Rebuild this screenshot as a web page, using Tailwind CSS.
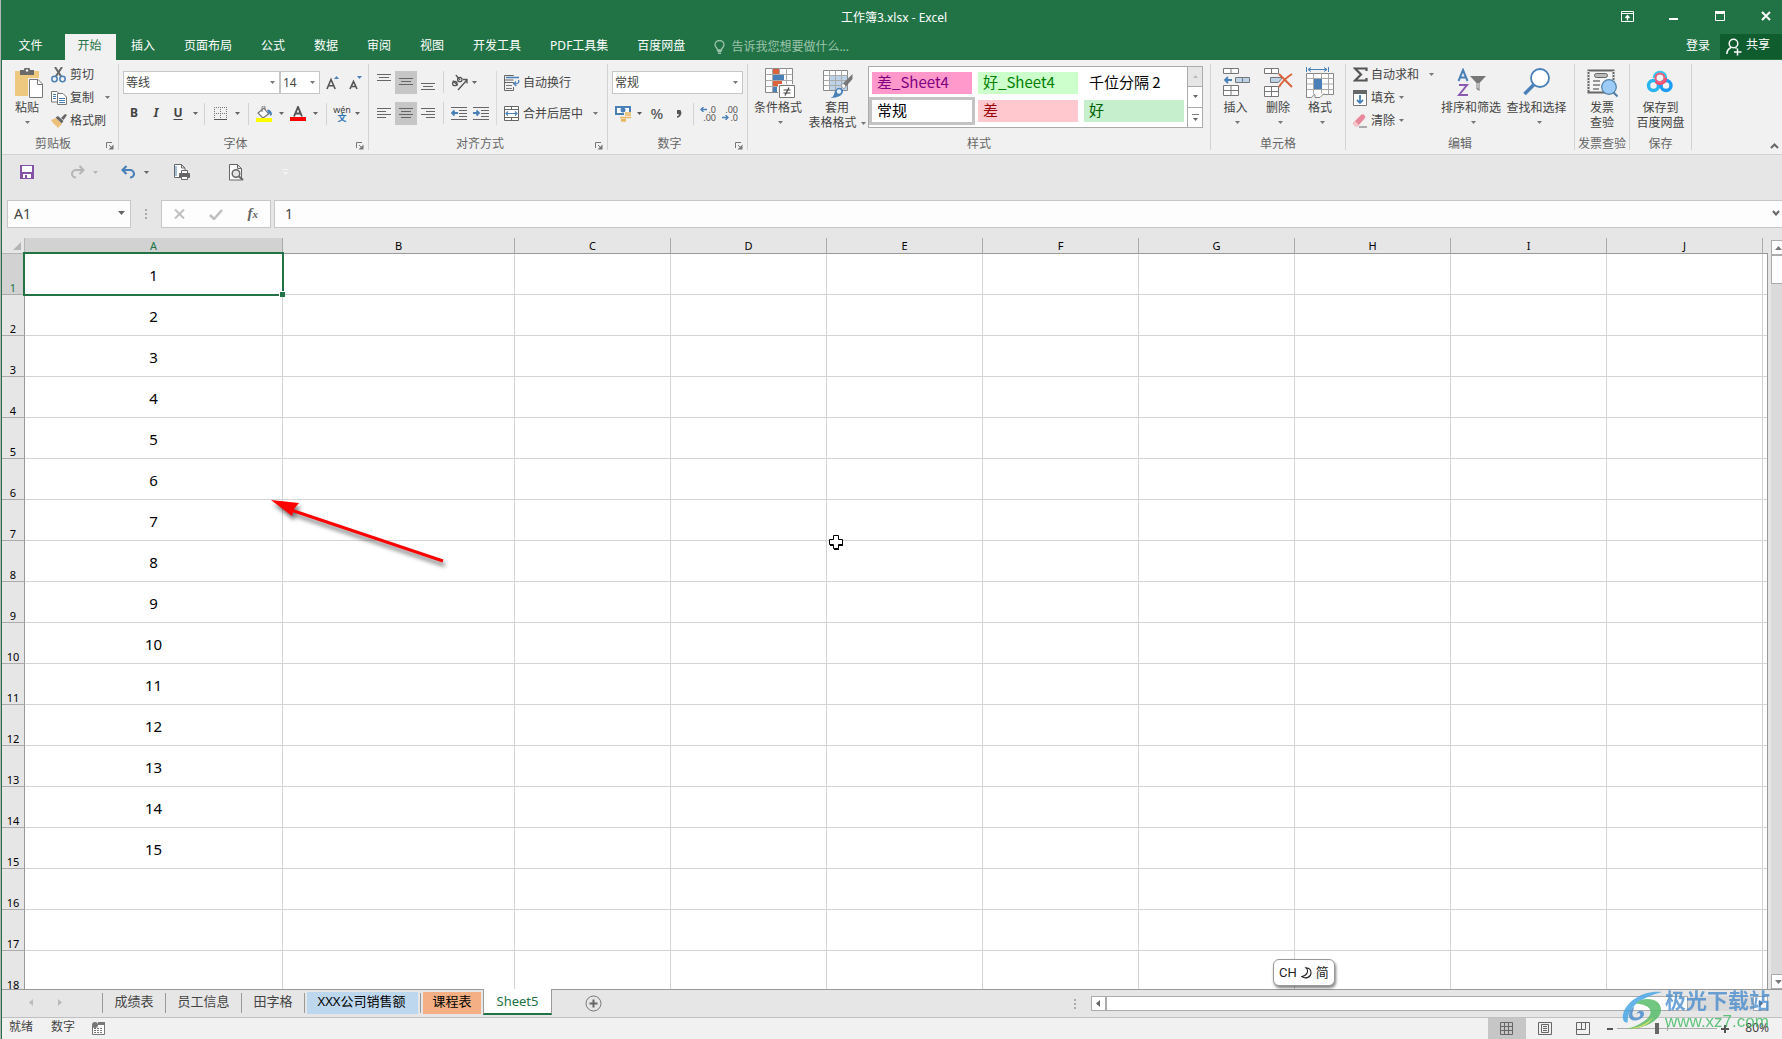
<!DOCTYPE html>
<html lang="zh-CN">
<head>
<meta charset="utf-8">
<title>工作簿3.xlsx - Excel</title>
<script src="https://cdn.jsdelivr.net/npm/@tailwindcss/browser@4"></script>
</head>
<body class="bg-[#b5b5b5] pl-px">
<!-- shared symbols -->
<svg class="hidden">
  <symbol id="dn" viewBox="0 0 7 4"><path d="M0 0h7L3.5 4z" fill="currentColor"/></symbol>
  <symbol id="up" viewBox="0 0 7 4"><path d="M0 4h7L3.5 0z" fill="currentColor"/></symbol>
  <symbol id="launch" viewBox="0 0 8 8"><path d="M.5 6V.5H6M3 3l3 3" fill="none" stroke="#777"/><path d="M7.500 2.500v5h-5z" fill="#777"/></symbol>
</svg>

<div class="flex h-screen flex-col overflow-hidden border-l border-[#217346] bg-[#e6e6e6] font-['Noto_Sans','Noto_Sans_CJK_SC',sans-serif] text-[12px] leading-[14px] text-[#444]">

  <!-- title bar -->
  <header class="relative flex h-[34px] shrink-0 items-center justify-center bg-[#217346] text-white">
    <h1 class="pt-px pl-[4px]">工作簿3.xlsx - Excel</h1>
    <div class="absolute top-0 right-0 flex h-[32px] items-center">
      <button aria-label="功能区显示选项" class="flex w-[46px] justify-center"><svg width="13" height="11" viewBox="0 0 13 11"><path d="M.5.5h12v10H.5zM.5 2.500h12" fill="none" stroke="#fff"/><path d="M6.500 9.500V5M4.500 7l2-2.500 2 2.500" fill="none" stroke="#fff" stroke-width="1.400"/></svg></button>
      <button aria-label="最小化" class="flex w-[47px] justify-center"><svg width="10" height="10"><path d="M0 7h9v2H0z" fill="#fff"/></svg></button>
      <button aria-label="最大化" class="flex w-[46px] justify-center"><svg width="10" height="10"><path d="M.5.5h9v9h-9z" fill="none" stroke="#fff"/><path d="M0 0h10v3H0z" fill="#fff"/></svg></button>
      <button aria-label="关闭" class="flex w-[39px] pl-[18px]"><svg width="10" height="10"><path d="M1 1l8 8M9 1L1 9" stroke="#fff" stroke-width="2"/></svg></button>
    </div>
  </header>

  <!-- ribbon tabs -->
  <nav class="flex h-[26px] shrink-0 items-stretch bg-[#217346] text-white">
    <button class="w-[63px] pr-[6px] pb-[2px]">文件</button>
    <button class="w-[51px] bg-[#f1f1f1] pr-[2px] pb-[2px] text-[#217346]">开始</button>
    <div class="ml-[15px] flex gap-[29px] pb-[2px]">
      <button>插入</button><button>页面布局</button><button>公式</button><button>数据</button><button>审阅</button><button>视图</button><button>开发工具</button><button>PDF工具集</button><button>百度网盘</button>
      <button class="flex items-center gap-[6px] pt-[2px] text-[#9cc3ab]"><svg width="11" height="14" viewBox="0 0 11 14" fill="none" stroke="#9cc3ab" stroke-width="1.300"><path d="M3.500 10C3.500 8 1 7 1 4.800a4.500 4.300 0 0 1 9 0C10 7 7.500 8 7.500 10zM3.500 11.500h4M4 13.300h3"/></svg>告诉我您想要做什么...</button>
    </div>
    <div class="ml-auto flex">
      <button class="pr-[10px] pb-[2px]">登录</button>
      <button class="mb-px flex w-[62px] items-center gap-1 bg-[#0f5c2f] pl-[6px]"><svg width="16" height="18" viewBox="0 0 16 18" fill="none" stroke="#fff" stroke-width="1.500"><circle cx="7.500" cy="5.500" r="4.300"/><path d="M5 9.500C2 11 1 13 .8 16M9.500 9.500l1 1M11.500 10.500v7M8 14h7.500"/></svg><span class="pb-[3px]">共享</span></button>
    </div>
  </nav>

  <!-- ribbon -->
  <section class="flex h-[95px] shrink-0 border-b border-[#d2d2d2] bg-[#f1f1f1]">
    <!-- clipboard -->
    <div class="relative flex w-[116px] flex-col">
      <div class="flex h-[76px]">
        <button class="flex w-[49px] flex-col items-center pt-[8px] pl-px">
          <svg class="ml-[4px]" width="28" height="30" viewBox="0 0 28 30"><path d="M0 3h24v25H0z" fill="#edc87e"/><path d="M5 7V2h4a3 3 0 0 1 6 0h4v5z" fill="#6a6a6a"/><circle cx="12" cy="2.500" r="1.200" fill="#f1f1f1"/><path d="M13 10h15v20H13z" fill="#f1f1f1"/><path d="M14.500 11.500H23l4.500 4.500v13.500h-13z" fill="#fff" stroke="#777"/><path d="M22.500 11.500v5h5" fill="none" stroke="#777"/></svg>
          <span class="mt-[3px]">粘贴</span><svg class="mt-[6px] text-[#777]" width="5" height="3"><use href="#dn"/></svg>
        </button>
        <div class="flex flex-col pt-[3px]">
          <button class="flex h-[23px] items-center gap-[3px]"><svg width="16" height="16" viewBox="0 0 16 16" fill="none"><path d="M4 0l6.500 10M11 0L4.500 10" stroke="#666" stroke-width="2"/><circle cx="3.500" cy="12" r="2.700" stroke="#4a80b8" stroke-width="1.500"/><circle cx="11.500" cy="12" r="2.700" stroke="#4a80b8" stroke-width="1.500"/></svg>剪切</button>
          <button class="flex h-[23px] items-center gap-[3px]"><svg width="16" height="14" viewBox="0 0 16 14"><g fill="#fff" stroke="#777"><path d="M.5.5H6L8.500 3v8h-8z"/><path d="M6.500 2.500H12L15.500 6v7.500h-9z"/></g><path d="M2 3.500h3M2 5.500h3M2 7.500h3M8 7.500h6M8 9.500h6M8 11.500h6" stroke="#4a80b8"/></svg>复制<svg class="ml-[8px] text-[#777]" width="5" height="3"><use href="#dn"/></svg></button>
          <button class="flex h-[23px] items-center gap-[3px]"><svg width="16" height="14" viewBox="0 0 16 14"><path d="M0 6l5-2 6 6-4 4C5 11 2 10 0 6z" fill="#edc07a"/><path d="M4.500 3.500L7 2l5.500 5-1.800 2.500zM10 4l4-4 2 1-3.500 5z" fill="#666"/></svg>格式刷</button>
        </div>
      </div>
      <div class="pt-px text-center text-[#666]"><span class="pr-[14px]">剪贴板</span></div>
      <button aria-label="剪贴板设置" class="absolute right-1 bottom-[4px]"><svg width="8" height="8"><use href="#launch"/></svg></button>
    </div>
    <div class="my-1 w-px bg-[#d2d2d2]"></div>

    <!-- font -->
    <div class="relative flex w-[249px] flex-col">
      <div class="flex h-[76px] flex-col gap-[8px] pt-[11px]">
        <div class="flex h-[23px] pl-[4px]">
          <label class="relative w-[157px]"><select aria-label="字体" class="h-[23px] w-full appearance-none border border-[#c6c6c6] bg-white pl-[2px]"><option>等线</option></select><svg class="absolute top-[10px] right-[5px] text-[#777]" width="5" height="3"><use href="#dn"/></svg></label>
          <label class="relative w-[40px]"><select aria-label="字号" class="h-[23px] w-full appearance-none border border-[#c6c6c6] bg-white pl-[2px]"><option>14</option></select><svg class="absolute top-[10px] right-[5px] text-[#777]" width="5" height="3"><use href="#dn"/></svg></label>
          <button aria-label="增大字号" class="flex w-[25px] items-center justify-center"><svg width="14" height="14" viewBox="0 0 14 14"><path d="M1 13L5 3.500 9.200 13M2.500 9.800h5.200" fill="none" stroke="#555" stroke-width="1.600"/><path d="M8 3l2.500-3L13 3z" fill="#4a80b8"/></svg></button>
          <button aria-label="减小字号" class="flex w-[21px] items-center justify-center"><svg width="13" height="14" viewBox="0 0 13 14"><path d="M1 13l3.500-7.500L8 13M2.200 10.500h4.500" fill="none" stroke="#555" stroke-width="1.600"/><path d="M8 0h5l-2.500 3z" fill="#4a80b8"/></svg></button>
        </div>
        <div class="flex h-[23px] items-center pl-[4px] text-[#666]">
          <button class="w-[22px] pb-px font-bold text-[#444]">B</button>
          <button class="w-[22px] pb-px font-bold text-[#444] italic">I</button>
          <button class="w-[22px] pb-px font-bold text-[#444] underline underline-offset-2">U</button>
          <button aria-label="下划线选项" class="flex w-[12px] justify-center"><svg width="5" height="3"><use href="#dn"/></svg></button>
          <div class="mr-[5px] ml-[3px] h-[22px] w-px bg-[#d2d2d2]"></div>
          <button aria-label="边框" class="flex w-[21px] justify-center"><svg width="14" height="14" viewBox="0 0 14 14"><path d="M.5 0v12M6.500 0v12M12.500 0v12M0 .5h13M0 6.500h13" fill="none" stroke="#777" stroke-dasharray="1 1"/><path d="M0 12.500h13" stroke="#555"/></svg></button>
          <button aria-label="边框选项" class="flex w-[13px] justify-center"><svg width="5" height="3"><use href="#dn"/></svg></button>
          <div class="mr-[4px] ml-[4px] h-[22px] w-px bg-[#d2d2d2]"></div>
          <button aria-label="填充颜色" class="flex w-[22px] justify-center"><svg width="16" height="16" viewBox="0 0 16 16"><path d="M2 7l6-5 4.500 6L7 12z" fill="#fff" stroke="#777" stroke-width="1.200"/><path d="M6 6V1.500a1.500 1.500 0 0 1 3 0V4" fill="none" stroke="#777"/><path d="M11 4c3-1 5 2 5 4.500L14.500 10C14 8 13 7 12.500 8z" fill="#4a80b8"/><path d="M0 12h16v4H0z" fill="#ff0"/></svg></button>
          <button aria-label="填充颜色选项" class="flex w-[12px] justify-center"><svg width="5" height="3"><use href="#dn"/></svg></button>
          <button aria-label="字体颜色" class="flex w-[22px] justify-center"><svg width="16" height="15" viewBox="0 0 16 15"><path d="M4 10.500L8 1l4 9.500M5.500 7.500h5" fill="none" stroke="#555" stroke-width="1.900"/><path d="M0 11h16v4H0z" fill="red"/></svg></button>
          <button aria-label="字体颜色选项" class="flex w-[12px] justify-center"><svg width="5" height="3"><use href="#dn"/></svg></button>
          <div class="mr-[5px] ml-[5px] h-[22px] w-px bg-[#d2d2d2]"></div>
          <button aria-label="拼音" class="flex w-[20px] flex-col items-center leading-[8px] text-[#444]"><span class="text-[9px]">wén</span><span class="text-[9px] font-bold text-[#2e75b6]">文</span></button>
          <button aria-label="拼音选项" class="flex w-[11px] justify-center"><svg width="5" height="3"><use href="#dn"/></svg></button>
        </div>
      </div>
      <div class="pt-px text-center text-[#666]"><span class="pr-[16px]">字体</span></div>
      <button aria-label="字体设置" class="absolute right-1 bottom-[4px]"><svg width="8" height="8"><use href="#launch"/></svg></button>
    </div>
    <div class="my-1 w-px bg-[#d2d2d2]"></div>

    <!-- alignment -->
    <div class="relative flex w-[238px] flex-col">
      <div class="flex h-[76px] pt-[11px] pl-[4px]">
        <div class="flex flex-col gap-[8px]">
          <div class="flex h-[23px] items-stretch text-[#666]">
            <button aria-label="顶端对齐" class="flex w-[22px] items-start justify-center pt-[3px]"><svg width="14" height="8"><path d="M0 .5h14M2 3.500h10M0 6.500h14" stroke="#666"/></svg></button>
            <button aria-label="垂直居中" class="flex w-[22px] items-start justify-center bg-[#c6c6c6] pt-[7px]"><svg width="14" height="8"><path d="M0 .5h14M2 3.500h10M0 6.500h14" stroke="#666"/></svg></button>
            <button aria-label="底端对齐" class="flex w-[22px] items-start justify-center pt-[12px]"><svg width="14" height="8"><path d="M0 .5h14M2 3.500h10M0 6.500h14" stroke="#666"/></svg></button>
            <div class="mr-[7px] ml-[4px] h-[22px] w-px bg-[#d2d2d2]"></div>
            <button aria-label="方向" class="flex items-center gap-[4px]"><svg width="17" height="17" viewBox="0 0 17 17"><g fill="none" stroke="#555" stroke-width="1.300"><circle cx="3.800" cy="9.500" r="2.200"/><path d="M1.800 6.700l5 4.500"/><circle cx="8.800" cy="5.500" r="2.200"/><path d="M4.800 1l4.200 5M7 16L15.500 6.500M16 9.500V5.500H12"/></g></svg><svg width="5" height="3"><use href="#dn"/></svg></button>
          </div>
          <div class="flex h-[23px] items-stretch">
            <button aria-label="左对齐" class="flex w-[22px] items-center justify-center"><svg width="14" height="11"><path d="M0 .5h14M0 3.500h9M0 6.500h14M0 9.500h9" stroke="#666"/></svg></button>
            <button aria-label="居中" class="flex w-[22px] items-center justify-center bg-[#c6c6c6]"><svg width="14" height="11"><path d="M0 .5h14M2 3.500h10M0 6.500h14M2 9.500h10" stroke="#666"/></svg></button>
            <button aria-label="右对齐" class="flex w-[22px] items-center justify-center"><svg width="14" height="11"><path d="M0 .5h14M5 3.500h9M0 6.500h14M5 9.500h9" stroke="#666"/></svg></button>
            <div class="mr-[7px] ml-[4px] h-[22px] w-px bg-[#d2d2d2]"></div>
            <button aria-label="减少缩进"><svg width="17" height="13"><path d="M0 .5h16M8 3.500h8M8 6.500h8M8 9.500h8M0 12.500h16" stroke="#666"/><path d="M7 6H1M3.500 3.500L1 6l2.500 2.500" fill="none" stroke="#4a80b8" stroke-width="1.800"/></svg></button>
            <button aria-label="增加缩进" class="ml-[5px]"><svg width="17" height="13"><path d="M0 .5h16M8 3.500h8M8 6.500h8M8 9.500h8M0 12.500h16" stroke="#666"/><path d="M0 6h6M3.500 3.500L6 6 3.500 8.500" fill="none" stroke="#4a80b8" stroke-width="1.800"/></svg></button>
          </div>
        </div>
        <div class="mr-[7px] ml-[6px] h-[54px] w-px bg-[#d9d9d9]"></div>
        <div class="flex flex-col gap-[8px]">
          <button class="flex h-[23px] items-center gap-[3px]"><svg width="16" height="16" viewBox="0 0 16 16"><path d="M9.500 12v3.500h-9V.5h9V1M.5 5h9M.5 7.500h9V9" fill="none" stroke="#666"/><path d="M2 10.500h6M2 13.500h6" stroke="#777"/><path d="M2 2.500h13M14.500 5c1 3-1 4-4 4M12 6.500L10 9l2.500 2" fill="none" stroke="#4a80b8" stroke-width="1.300"/></svg>自动换行</button>
          <button class="flex h-[23px] items-center gap-[3px]"><svg width="16" height="15" viewBox="0 0 16 15"><path d="M.5.5h14v14H.5zM.5 3.500h14M.5 11.500h14M7.500.5v3M7.500 11.500v3" fill="#fff" stroke="#666"/><path d="M2 7.500h11M4 5.500l-2 2 2 2M11 5.500l2 2-2 2" fill="none" stroke="#4a80b8" stroke-width="1.200"/></svg>合并后居中<svg class="ml-[7px] text-[#777]" width="5" height="3"><use href="#dn"/></svg></button>
        </div>
      </div>
      <div class="pt-px text-center text-[#666]"><span class="pr-[16px]">对齐方式</span></div>
      <button aria-label="对齐设置" class="absolute right-1 bottom-[4px]"><svg width="8" height="8"><use href="#launch"/></svg></button>
    </div>
    <div class="my-1 w-px bg-[#d2d2d2]"></div>

    <!-- number -->
    <div class="relative flex w-[139px] flex-col">
      <div class="flex h-[76px] flex-col gap-[8px] pt-[11px] pl-[4px]">
        <label class="relative h-[23px] w-[131px]"><select aria-label="数字格式" class="h-[23px] w-full appearance-none border border-[#c6c6c6] bg-white pl-[2px]"><option>常规</option></select><svg class="absolute top-[10px] right-[5px] text-[#777]" width="5" height="3"><use href="#dn"/></svg></label>
        <div class="flex h-[23px] items-center pl-[3px] text-[#555]">
          <button aria-label="会计数字格式"><svg width="17" height="17" viewBox="0 0 17 17"><path d="M0 1h16v9H0z" fill="#4a80b8"/><path d="M2 3h12v5H2z" fill="#fff"/><circle cx="8" cy="5" r="2.500" fill="#4a80b8"/><path d="M9 7h7v4h-2v5H5v-5h4z" fill="#f1f1f1"/><path d="M10 8h6M10 10h6M10 12.500h6M5 12.500h6M6 14.500h5M6 16h5" stroke="#e8b860" stroke-width="1.400"/></svg></button>
          <button aria-label="会计格式选项" class="flex w-[14px] justify-center"><svg width="5" height="3"><use href="#dn"/></svg></button>
          <button class="w-[22px] pb-px text-[15px] font-medium">%</button>
          <button aria-label="千位分隔样式" class="flex w-[22px] justify-center"><svg width="6" height="8"><path d="M1 0h3.500L5.500 3C5 5.500 3.500 7.500 1 8V6.500c1-.5 1.500-1 2-2.500H1z" fill="#555"/></svg></button>
          <div class="mr-[6px] ml-[3px] h-[22px] w-px bg-[#d2d2d2]"></div>
          <button aria-label="增加小数位数" class="grid w-[16px] text-right text-[9px] leading-[8px]"><span class="flex items-center justify-between"><svg width="7" height="5"><path d="M7 2.500H1M3.500 0L1 2.500 3.500 5" fill="none" stroke="#4a80b8" stroke-width="1.400"/></svg>.0</span><span>.00</span></button>
          <button aria-label="减少小数位数" class="ml-[6px] grid w-[16px] text-right text-[9px] leading-[8px]"><span>.00</span><span class="flex items-center justify-between"><svg width="7" height="5"><path d="M0 2.500h6M3.500 0L6 2.500 3.500 5" fill="none" stroke="#4a80b8" stroke-width="1.400"/></svg>.0</span></button>
        </div>
      </div>
      <div class="pt-px text-center text-[#666]"><span class="pr-[16px]">数字</span></div>
      <button aria-label="数字设置" class="absolute right-1 bottom-[4px]"><svg width="8" height="8"><use href="#launch"/></svg></button>
    </div>
    <div class="my-1 w-px bg-[#d2d2d2]"></div>

    <!-- styles -->
    <div class="flex w-[462px] flex-col">
      <div class="flex h-[76px]">
        <button class="flex w-[60px] flex-col items-center pt-[8px]">
          <svg class="ml-[3px]" width="30" height="30" viewBox="0 0 30 30"><path d="M.5.5h27v24H.5z" fill="#fff" stroke="#888"/><path d="M.5 6.500h27M.5 12.500h27M.5 18.500h27M7.500 0v24M14.500 0v24M21.500 0v24" stroke="#aaa"/><path d="M8 1h6v5H8zM8 13h9v5H8z" fill="#d9643c"/><path d="M8 7h11v5H8zM8 19h4v5H8z" fill="#4a80b8"/><path d="M13 16h17v14H13z" fill="#f1f1f1"/><path d="M14.500 17.500h15v12h-15z" fill="#fff" stroke="#777"/><path d="M18.500 22h7M18.500 25h7M24 19.500l-4 8" stroke="#444" stroke-width="1.200"/></svg>
          <span class="mt-[3px]">条件格式</span><svg class="mt-[6px] ml-[4px] text-[#777]" width="5" height="3"><use href="#dn"/></svg>
        </button>
        <button class="flex w-[60px] flex-col items-center pt-[8px] pr-[2px]">
          <svg class="ml-[2px]" width="30" height="30" viewBox="0 0 30 30"><path d="M.5 2.500h24v20H.5z" fill="#fff" stroke="#888"/><path d="M7 8h17v14H7z" fill="#bdd3ea"/><path d="M.5 7.500h24M.5 12.500h24M.5 17.500h24M6.500 2.500v20M12.500 2.500v20M18.500 2.500v20" stroke="#aaa"/><path d="M29.500 6v5l-7 8-3-3z" fill="#777"/><path d="M20 15l3 3-2 3-3-3z" fill="#f1f1f1" stroke="#777" stroke-width=".6"/><path d="M7 30c4-1 4-4 5-7 2-4 6-4 8-1 1 5-5 8-13 8z" fill="#4a80b8"/><circle cx="16" cy="23.500" r="2.200" fill="#e8f0f8"/></svg>
          <span class="mt-[3px]">套用</span><span class="mt-px flex items-center gap-[4px] whitespace-nowrap">表格格式<svg class="text-[#777]" width="5" height="3"><use href="#dn"/></svg></span>
        </button>
        <div class="mt-[6px] flex h-[62px] border border-[#ababab] bg-white font-['Noto_Sans_CJK_SC',sans-serif] text-[15px] leading-[20px]">
          <div class="grid w-[318px] grid-cols-3 content-start gap-[6px] pt-[5px] pr-[3px] pl-[3px] text-left">
            <button class="h-[22px] bg-[#ff99cc] pb-[2px] pl-[5px] text-left text-[#800080]">差_Sheet4</button>
            <button class="h-[22px] bg-[#ccffcc] pb-[2px] pl-[5px] text-left text-[#008000]">好_Sheet4</button>
            <button class="h-[22px] pb-[2px] pl-[5px] text-left text-black">千位分隔 2</button>
            <button class="h-[22px] bg-white pb-[2px] pl-[5px] text-left text-black outline-3 outline-[#c3c3c3]">常规</button>
            <button class="h-[22px] bg-[#ffc7ce] pb-[2px] pl-[5px] text-left text-[#9c0006]">差</button>
            <button class="h-[22px] bg-[#c6efce] pb-[2px] pl-[5px] text-left text-[#006100]">好</button>
          </div>
          <div class="flex w-[15px] flex-col divide-y divide-[#ababab] border-l border-[#ababab] text-[#666]">
            <button aria-label="上一行" class="flex flex-1 items-center justify-center bg-[#e6e6e6] text-[#bbb]"><svg width="5" height="3"><use href="#up"/></svg></button>
            <button aria-label="下一行" class="flex flex-1 items-center justify-center"><svg width="5" height="3"><use href="#dn"/></svg></button>
            <button aria-label="其他样式" class="flex flex-1 flex-col items-center justify-center gap-[3px]"><span class="h-px w-[7px] bg-[#777]"></span><svg width="5" height="3"><use href="#dn"/></svg></button>
          </div>
        </div>
      </div>
      <div class="pt-px text-center text-[#666]">样式</div>
    </div>
    <div class="my-1 w-px bg-[#d2d2d2]"></div>

    <!-- cells -->
    <div class="flex w-[134px] flex-col">
      <div class="flex h-[76px] pl-[3px]">
        <button class="flex w-[43px] flex-col items-center pt-[8px]">
          <svg class="ml-px" width="27" height="30" viewBox="0 0 27 30"><path d="M.5.5h15v5H.5zM8 .5v5M.5 17.500h15v10H.5zM.5 22.500h15M8 17.500v10" fill="#fff" stroke="#777"/><path d="M12.500 9.500h14v5h-14zM19.500 9.500v5" fill="#bdd3ea" stroke="#777"/><path d="M9 12H2M5 9l-3 3 3 3" fill="none" stroke="#4a80b8" stroke-width="1.800"/></svg>
          <span class="mt-[3px]">插入</span><svg class="mt-[6px] ml-[4px] text-[#777]" width="5" height="3"><use href="#dn"/></svg>
        </button>
        <button class="flex w-[42px] flex-col items-center pt-[8px]">
          <svg width="29" height="30" viewBox="0 0 29 30"><path d="M.5.5h14v5H.5zM7.500.5v5M.5 18.500h14v10H.5zM.5 23.500h14M7.500 18.500v10" fill="#fff" stroke="#777"/><path d="M6.500 9.500h12l-4 5h-8z" fill="#bdd3ea" stroke="#777"/><path d="M15 6l13 13M28 6c-5 3-10 8-13 13" fill="none" stroke="#d9643c" stroke-width="2"/></svg>
          <span class="mt-[3px]">删除</span><svg class="mt-[6px] ml-[4px] text-[#777]" width="5" height="3"><use href="#dn"/></svg>
        </button>
        <button class="flex w-[42px] flex-col items-center pt-[7px]">
          <svg width="28" height="31" viewBox="0 0 28 31"><path d="M.5 6.500h27v21H.5z" fill="#fff" stroke="#888"/><path d="M.5 11.500h27M.5 22.500h27M7.500 6.500v21M15.500 6.500v21M22.500 6.500v21M.5 17h27" stroke="#aaa"/><path d="M8 12h8v10H8z" fill="#4a80b8"/><path d="M.5 27v3.500h5l2.500-3h1v3h5l4-4" fill="#fff" stroke="#888"/><path d="M.5 0v5M22.500 0v5M2 2.500h19M5 .5l-3 2 3 2M18 .5l3 2-3 2" fill="none" stroke="#4a80b8"/></svg>
          <span class="mt-[3px]">格式</span><svg class="mt-[6px] ml-[4px] text-[#777]" width="5" height="3"><use href="#dn"/></svg>
        </button>
      </div>
      <div class="pt-px text-center text-[#666]">单元格</div>
    </div>
    <div class="my-1 w-px bg-[#d2d2d2]"></div>

    <!-- editing -->
    <div class="flex w-[228px] flex-col">
      <div class="flex h-[76px] pl-[7px]">
        <div class="flex w-[84px] flex-col pt-[3px] text-[#444]">
          <button class="flex h-[23px] items-center gap-[3px]"><svg width="15" height="15"><path d="M13.500 4V1.500H2L8 7.500l-6 6h11.500V11" fill="none" stroke="#555" stroke-width="2.200"/></svg>自动求和<svg class="ml-[7px] text-[#777]" width="5" height="3"><use href="#dn"/></svg></button>
          <button class="flex h-[23px] items-center gap-[3px]"><svg width="15" height="16"><path d="M.5.5h13v15H.5z" fill="#fff" stroke="#777"/><path d="M0 0h14v4H0z" fill="#666"/><path d="M7 5v8M4 10l3 3 3-3" fill="none" stroke="#4a80b8" stroke-width="1.800"/></svg>填充<svg class="ml-px text-[#777]" width="5" height="3"><use href="#dn"/></svg></button>
          <button class="flex h-[23px] items-center gap-[3px]"><svg width="15" height="14"><path d="M0 9l8-8c2-2 5 1 4 3l-7 8c-2 1-4 0-5-3z" fill="#e8889a"/><path d="M0 9l2-2 4 4-2 1.500C2 13 1 11 0 9z" fill="#f4c3cb"/><path d="M6 13h8" stroke="#666"/></svg>清除<svg class="ml-px text-[#777]" width="5" height="3"><use href="#dn"/></svg></button>
        </div>
        <button class="flex w-[68px] flex-col items-center pt-[8px]">
          <svg class="ml-[2px]" width="30" height="30" viewBox="0 0 30 30"><path d="M1.500 13L6 2l4.500 11M3 9.500h6" fill="none" stroke="#4a80b8" stroke-width="2"/><path d="M2 17h8L2 27h9" fill="none" stroke="#8b5bb0" stroke-width="2"/><path d="M13 8h16l-6.500 7v8l-3-2v-6z" fill="#777"/><path d="M20.500 15h1v6l-1-.7z" fill="#fff"/></svg>
          <span class="mt-[3px] whitespace-nowrap">排序和筛选</span><svg class="mt-[6px] ml-[5px] text-[#777]" width="5" height="3"><use href="#dn"/></svg>
        </button>
        <button class="flex w-[63px] flex-col items-center pt-[8px]">
          <svg width="28" height="30" viewBox="0 0 28 30"><circle cx="17" cy="10" r="9" fill="#fff" stroke="#4a80b8" stroke-width="1.800"/><path d="M10.500 17L1.500 26" stroke="#4a80b8" stroke-width="3.500"/></svg>
          <span class="mt-[3px] whitespace-nowrap">查找和选择</span><svg class="mt-[6px] ml-[5px] text-[#777]" width="5" height="3"><use href="#dn"/></svg>
        </button>
      </div>
      <div class="pt-px text-center text-[#666]">编辑</div>
    </div>
    <div class="my-1 w-px bg-[#d2d2d2]"></div>

    <!-- invoice check -->
    <div class="flex w-[54px] flex-col items-center">
      <button class="flex h-[76px] flex-col items-center pt-[8px]">
        <svg width="31" height="30" viewBox="0 0 31 30"><path d="M1.500 2.500h25v22H1.500z" fill="#f4f4f4" stroke="#666" stroke-width="2"/><path d="M1.500 3v21M26.500 3v21" stroke="#f1f1f1" stroke-width="2" stroke-dasharray="1 2"/><rect x="7.500" y="5.500" width="13" height="4" rx="2" fill="#bbb" stroke="#666"/><path d="M6 13h7M6 17h7M6 21h6" stroke="#777" stroke-width="1.500"/><circle cx="22" cy="19" r="7.300" fill="#9ccbf7" stroke="#4d7fa6" stroke-width="1.200"/><path d="M26.500 24.500l4 4" stroke="#4d7fa6" stroke-width="2"/></svg>
        <span class="mt-[3px]">发票</span><span class="mt-px">查验</span>
      </button>
      <div class="pt-px text-center whitespace-nowrap text-[#666]">发票查验</div>
    </div>
    <div class="my-1 w-px bg-[#d2d2d2]"></div>

    <!-- save to netdisk -->
    <div class="flex w-[61px] flex-col items-center">
      <button class="flex h-[76px] flex-col items-center pt-[8px]">
        <svg width="28" height="30" viewBox="0 0 28 30" fill="none" stroke-width="3.500"><circle cx="7.500" cy="17.500" r="5" stroke="#27b5f0"/><circle cx="20" cy="17.500" r="5" stroke="#1c9cf2"/><path d="M8.500 10a5.500 5.500 0 0 1 11 0" stroke="#31c6ee"/><path d="M19.500 10a5.500 5.500 0 0 1-9.500 3.500" stroke="#ef4b6c"/><circle cx="14" cy="10" r="4.500" stroke="#ef5f7b" stroke-width="2"/></svg>
        <span class="mt-[3px]">保存到</span><span class="mt-px">百度网盘</span>
      </button>
      <div class="pt-px text-center text-[#666]">保存</div>
    </div>
    <div class="my-1 w-px bg-[#d2d2d2]"></div>
    <button aria-label="折叠功能区" class="mt-auto ml-auto pr-[3px] pb-[5px]"><svg width="9" height="6"><path d="M1 5l3.500-3.500L8 5" fill="none" stroke="#666" stroke-width="2"/></svg></button>
  </section>

  <!-- quick access -->
  <section class="flex h-[45px] shrink-0 items-center pb-[11px] pl-[18px] text-[#666]">
    <button aria-label="保存"><svg width="14" height="14"><path d="M0 0h14v14H0z" fill="#8652a8"/><path d="M2 1h10v6H2zM3 9h8v4H3z" fill="#fff"/><path d="M5 10h2v3H5z" fill="#8652a8"/></svg></button>
    <button aria-label="恢复" class="ml-[36px]"><svg width="15" height="14"><path d="M14 5H6a4 4 0 0 0-4 4c0 2 2 3.500 4 3.500M9.500 1l4 4-4 4" fill="none" stroke="#b5b5b5" stroke-width="2"/></svg></button>
    <button aria-label="恢复选项" class="ml-[8px] text-[#b5b5b5]"><svg width="5" height="3"><use href="#dn"/></svg></button>
    <button aria-label="撤消" class="ml-[23px]"><svg width="15" height="14"><path d="M1 5h8a4 4 0 0 1 4 4c0 2-2 3.500-4 3.500M5.500 1l-4 4 4 4" fill="none" stroke="#4a80b8" stroke-width="2.200"/></svg></button>
    <button aria-label="撤消选项" class="ml-[8px]"><svg width="5" height="3"><use href="#dn"/></svg></button>
    <button aria-label="打印" class="ml-[25px]"><svg width="17" height="17"><path d="M8 13.500H.5V.5h7L11 4v2M7.500.5V4H11" fill="#fff" stroke="#666"/><path d="M2 2v10" stroke="#4a80b8"/><path d="M5.500 9.500h10v4h-10z" fill="#666" stroke="#666"/><path d="M7.500 6.500h6v3h-6zM7.500 12.500h6v3h-6z" fill="#fff" stroke="#666"/></svg></button>
    <button aria-label="打印预览" class="ml-[38px]"><svg width="15" height="17"><path d="M.5.5h8l4 4v11.500H.5zM8.500.5v4h4" fill="#fff" stroke="#666"/><circle cx="7" cy="9.500" r="3.800" fill="#e6e6e6" stroke="#666" stroke-width="1.500"/><path d="M10 12.500l4 3.500" stroke="#666" stroke-width="2"/></svg></button>
    <button aria-label="自定义快速访问工具栏" class="ml-[39px] flex flex-col items-center gap-[2px] text-[#f6f6f6]"><span class="h-px w-[5px] bg-[#f6f6f6]"></span><svg width="5" height="3"><use href="#dn"/></svg></button>
  </section>

  <!-- formula bar -->
  <section class="mb-[10px] flex h-[28px] shrink-0 items-stretch pl-[5px] text-[14px]">
    <div class="relative w-[124px]"><input aria-label="名称框" value="A1" class="h-full w-full border border-[#c6c6c6] bg-[#fdfdfd] pb-[2px] pl-[6px]"><svg class="absolute top-[11px] right-[6px] text-[#666]" width="7" height="4"><use href="#dn"/></svg></div>
    <div class="flex w-[30px] flex-col items-center justify-center gap-[2px]"><i class="size-[2px] bg-[#aaa]"></i><i class="size-[2px] bg-[#aaa]"></i><i class="size-[2px] bg-[#aaa]"></i></div>
    <div class="mr-[3px] flex w-[110px] items-center justify-between border border-[#c6c6c6] bg-[#fdfdfd] pr-[12px] pl-[12px]">
      <button aria-label="取消"><svg width="11" height="10"><path d="M1 .5l9 9M10 .5l-9 9" stroke="#bfbfbf" stroke-width="2"/></svg></button>
      <button aria-label="输入"><svg width="14" height="11"><path d="M1 6l4 4 8-9" fill="none" stroke="#bfbfbf" stroke-width="2.500"/></svg></button>
      <button class="pb-[2px] font-['Liberation_Serif',serif] text-[15px] font-bold text-[#666] italic">f<span class="text-[11px]">x</span></button>
    </div>
    <div class="relative flex-1"><input aria-label="编辑栏" value="1" class="h-full w-full border border-r-0 border-[#c6c6c6] bg-[#fdfdfd] pb-[2px] pl-[10px]"><svg class="absolute top-[10px] right-[2px]" width="8" height="6"><path d="M1 1l3 3.500L7 1" fill="none" stroke="#666" stroke-width="2"/></svg></div>
  </section>

  <!-- sheet -->
  <main class="relative flex min-h-0 flex-1">
    <div class="min-w-0 flex-1 overflow-hidden">
      <table class="w-[1920px] table-fixed border-separate border-spacing-0 text-black">
        <colgroup id="cols"><col class="w-[23px]"><col class="w-[258px]"><col class="w-[232px]"></colgroup>
        <thead><tr id="head" class="h-[16px] text-[11px] leading-[14px]">
          <th class="border-r border-b border-[#b5b5b5] p-0"><svg class="mr-[3px] ml-auto" width="8" height="8"><path d="M8 0v8H0z" fill="#b5b5b5"/></svg></th>
          <th class="border-r border-b border-r-[#ababab] border-b-[#999] bg-[#d2d2d2] p-0 font-normal text-[#217346]">A</th>
        </tr></thead>
        <tbody id="body" class="bg-white"></tbody>
      </table>
    </div>
    <div class="mt-[15px] w-1 border-l border-[#999]"></div>
    <!-- vertical scrollbar -->
    <div class="mt-[2px] flex w-[11px] flex-col overflow-hidden bg-[#dadada] text-[#777]">
      <button aria-label="向上滚动" class="flex h-[15px] items-center border border-r-0 border-[#ababab] bg-white pl-[3px]"><svg width="7" height="4"><use href="#up"/></svg></button>
      <div class="h-[29px] border border-r-0 border-[#ababab] bg-white"></div>
      <button aria-label="向下滚动" class="mt-auto flex h-[15px] items-center border border-r-0 border-[#ababab] bg-white pl-[3px]"><svg width="7" height="4"><use href="#dn"/></svg></button>
    </div>

    <!-- annotation arrow -->
    <svg class="absolute top-[252px] left-[259px] drop-shadow-[2px_4px_2px_rgba(0,0,0,0.55)]" width="200" height="80"><path d="M30 20L182 71" stroke="#f00" stroke-width="3" fill="none"/><path d="M10 10l28 3-5 6-2 7z" fill="#f00"/></svg>
    <!-- cell cursor -->
    <svg class="absolute top-[296px] left-[826px]" width="17" height="17"><path d="M6 3h5v4h4v5h-4v4H6v-4H2V7h4z" fill="#000"/><path d="M5.500 1.500h5v4h4v5h-4v4h-5v-4h-4v-5h4z" fill="#fff" stroke="#000"/></svg>
    <!-- input method badge -->
    <div class="absolute right-[447px] bottom-[3px] flex h-[27px] w-[62px] items-center justify-center gap-[4px] rounded-[6px] border border-[#999] bg-white font-['Roboto','Noto_Sans_CJK_SC',sans-serif] text-[13px] text-[#222] shadow-[1px_2px_3px_rgba(0,0,0,0.5)]">CH<svg width="11" height="12"><path d="M5 .8C8 3.500 6.500 8.500.8 9.500 5 12.500 10 10 10 6 10 3 8 1 5 .8z" fill="none" stroke="#222" stroke-width="1.100"/></svg>简</div>
  </main>

  <!-- sheet tabs -->
  <section class="flex h-[28px] shrink-0 items-start border-t border-[#999] text-[13px]">
    <div class="flex h-[25px] w-[100px] items-center gap-[25px] pl-[27px]">
      <button aria-label="上一个工作表"><svg width="4" height="7"><path d="M4 0v7L0 3.500z" fill="#bbb"/></svg></button>
      <button aria-label="下一个工作表"><svg width="4" height="7"><path d="M0 0v7l4-3.500z" fill="#bbb"/></svg></button>
    </div>
    <div class="flex">
      <button class="mt-[3px] h-[20px] w-[63px] border-l border-[#999] pb-[4px]">成绩表</button>
      <button class="mt-[3px] h-[20px] w-[76px] border-l border-[#999] pb-[4px]">员工信息</button>
      <button class="mt-[3px] h-[20px] w-[63px] border-l border-[#999] pb-[4px]">田字格</button>
      <div class="mt-[3px] h-[20px] w-[3px] border-l border-[#999]"></div>
      <button class="mt-[2px] h-[22px] w-[111px] bg-[#bdd7ee] pr-[2px] pb-[4px] text-black">XXX公司销售额</button>
      <div class="mt-[3px] ml-[2px] h-[20px] w-[3px] border-l border-[#999]"></div>
      <button class="mt-[2px] h-[22px] w-[58px] bg-[#f4b084] pb-[4px] text-black">课程表</button>
      <button class="-mt-px ml-[2px] h-[26px] w-[69px] border-r border-b-2 border-l border-x-[#999] border-b-[#217346] bg-white text-[#217346]">Sheet5</button>
    </div>
    <button aria-label="新工作表" class="mt-[5px] ml-[33px]"><svg width="17" height="17"><circle cx="8.500" cy="8.500" r="7.500" fill="none" stroke="#777"/><path d="M8.500 4.500v8M4.500 8.500h8" stroke="#666" stroke-width="2"/></svg></button>
    <!-- horizontal scrollbar -->
    <div class="mt-[6px] mr-[14px] ml-auto flex h-[15px] w-[39%] items-stretch">
      <div class="mr-[15px] flex w-[2px] flex-col justify-center gap-[2px]"><i class="size-[2px] bg-[#aaa]"></i><i class="size-[2px] bg-[#aaa]"></i><i class="size-[2px] bg-[#aaa]"></i></div>
      <button aria-label="向左滚动" class="flex w-[15px] items-center justify-center border border-[#ababab] bg-white"><svg width="4" height="7"><path d="M4 0v7L0 3.500z" fill="#666"/></svg></button>
      <div class="flex-1 border border-[#ababab] bg-white"></div>
      <div class="w-[65px] bg-[#dadada]"></div>
      <button aria-label="向右滚动" class="flex w-[15px] items-center justify-center border border-[#ababab] bg-white"><svg width="4" height="7"><path d="M0 0v7l4-3.500z" fill="#666"/></svg></button>
    </div>
  </section>

  <!-- status bar -->
  <footer class="relative flex h-[22px] shrink-0 items-stretch border-t border-[#c0c0c0] bg-[#f1f1f1]">
    <div class="flex items-center pb-[4px] pl-[7px]"><span>就绪</span><span class="ml-[18px]">数字</span>
      <svg class="mt-[3px] ml-[17px]" width="14" height="13"><path d="M.5 4v8.500h12V1H6" fill="#fff" stroke="#777"/><path d="M6 0h7v3H6z" fill="#777"/><circle cx="3" cy="3" r="3" fill="#777"/><path d="M2 6.500h9M2 8.500h9M2 10.500h9" stroke="#777" stroke-dasharray="2 1"/></svg></div>
    <div class="ml-auto flex items-stretch">
      <button aria-label="普通" class="flex w-[38px] items-center justify-center bg-[#c6c6c6]"><svg width="14" height="13"><path d="M.5.5h12v12H.5zM4.500 0v13M8.500 0v13M0 4.500h13M0 8.500h13" fill="none" stroke="#666"/></svg></button>
      <button aria-label="页面布局" class="flex w-[38px] items-center justify-center"><svg width="14" height="13"><path d="M.5.5h13v12H.5zM3.500 2.500h7v8h-7zM5 4.500h4M5 6.500h4M5 8.500h4" fill="none" stroke="#666"/></svg></button>
      <button aria-label="分页预览" class="flex w-[38px] items-center justify-center"><svg width="14" height="13"><path d="M.5.5h13v12H.5zM5.500.5v7M9.500.5v7M1 7.500h8.500" fill="none" stroke="#666"/></svg></button>
      <button aria-label="缩小" class="ml-[5px] flex items-center"><svg width="6" height="2"><path d="M0 0h6v2H0z" fill="#555"/></svg></button>
      <div class="relative ml-[4px] flex w-[100px] items-center">
        <input type="range" aria-label="显示比例" min="0" max="100" value="40" class="h-px w-full appearance-none bg-[#aaa] [&::-webkit-slider-thumb]:h-[11px] [&::-webkit-slider-thumb]:w-[4px] [&::-webkit-slider-thumb]:appearance-none [&::-webkit-slider-thumb]:bg-[#666]">
        <div class="absolute top-[8px] left-[50px] h-[5px] w-px bg-[#aaa]"></div>
      </div>
      <button aria-label="放大" class="ml-[4px] flex items-center"><svg width="8" height="8"><path d="M4 0v8M0 4h8" stroke="#555" stroke-width="2"/></svg></button>
      <button class="w-[53px] pr-[13px] pb-[2px] text-right">80%</button>
    </div>
    <!-- site watermark -->
    <div class="pointer-events-none absolute right-[12px] bottom-[9px] flex items-center gap-[2px]">
      <svg class="mt-[4px] opacity-85" width="42" height="40" viewBox="0 0 42 42"><path d="M42 2C22 0 4 12 1 26c-1 6 2 9 5 8C5 18 20 8 42 2z" fill="#4aa7e6"/><path d="M14 14c10-8 27-5 27 7 0 10-16 20-36 20 14-4 25-11 25-18 0-6-9-8-16-9z" fill="#59bd6b"/><path d="M13 17c-8 6-7 15 0 15 6 0 11-4 10-8-1-3-6-3-8 1 3-2 5 0 4 2-2 4-9 3-8-3z" fill="#4a8fce"/><path d="M3 40c10 1 22-3 30-12-5 9-16 14-30 12z" fill="#d7dc4a"/></svg>
      <div class="flex flex-col gap-[4px] opacity-75"><span class="font-['Noto_Sans_CJK_SC',sans-serif] text-[21px] leading-[24px] font-bold text-[#3f86cc]">极光下载站</span><span class="font-['Liberation_Sans',sans-serif] text-[17px] leading-[14px] text-[#2fb457]">www.xz7.com</span></div>
    </div>
  </footer>
</div>

<script>
  const letters = ['B','C','D','E','F','G','H','I','J','K'];
  document.getElementById('cols').insertAdjacentHTML('beforeend', '<col class="w-[156px]">'.repeat(8) + '<col>');
  document.getElementById('head').insertAdjacentHTML('beforeend', letters.map(l =>
    `<th class="border-r border-b border-r-[#ababab] border-b-[#999] p-0 font-normal">${l === 'K' ? '' : l}</th>`).join(''));
  const filled = 15, rows = 18;
  let html = '';
  for (let r = 1; r <= rows; r++) {
    const on = r === 1;
    html += `<tr class="h-[41px]"><th class="${on ? 'bg-[#d2d2d2] text-[#217346]' : 'bg-[#e6e6e6]'} border-r border-b border-r-[#999] border-b-[#ababab] p-0 align-bottom text-[11px] leading-[13px] font-normal">${r}</th>`
      + `<td class="relative border-r border-b border-[#d4d4d4] p-0 pt-px text-center text-[15px] leading-[18px]">${r <= filled ? r : ''}`
      + (on ? '<div class="absolute -inset-0.5 z-10 border-2 border-[#217346]"><i class="absolute -right-[3px] -bottom-[3px] size-[6px] border-t border-l border-white bg-[#217346]"></i></div>' : '')
      + '</td>' + '<td class="border-r border-b border-[#d4d4d4] p-0"></td>'.repeat(letters.length) + '</tr>';
  }
  document.getElementById('body').innerHTML = html;
</script>
</body>
</html>
